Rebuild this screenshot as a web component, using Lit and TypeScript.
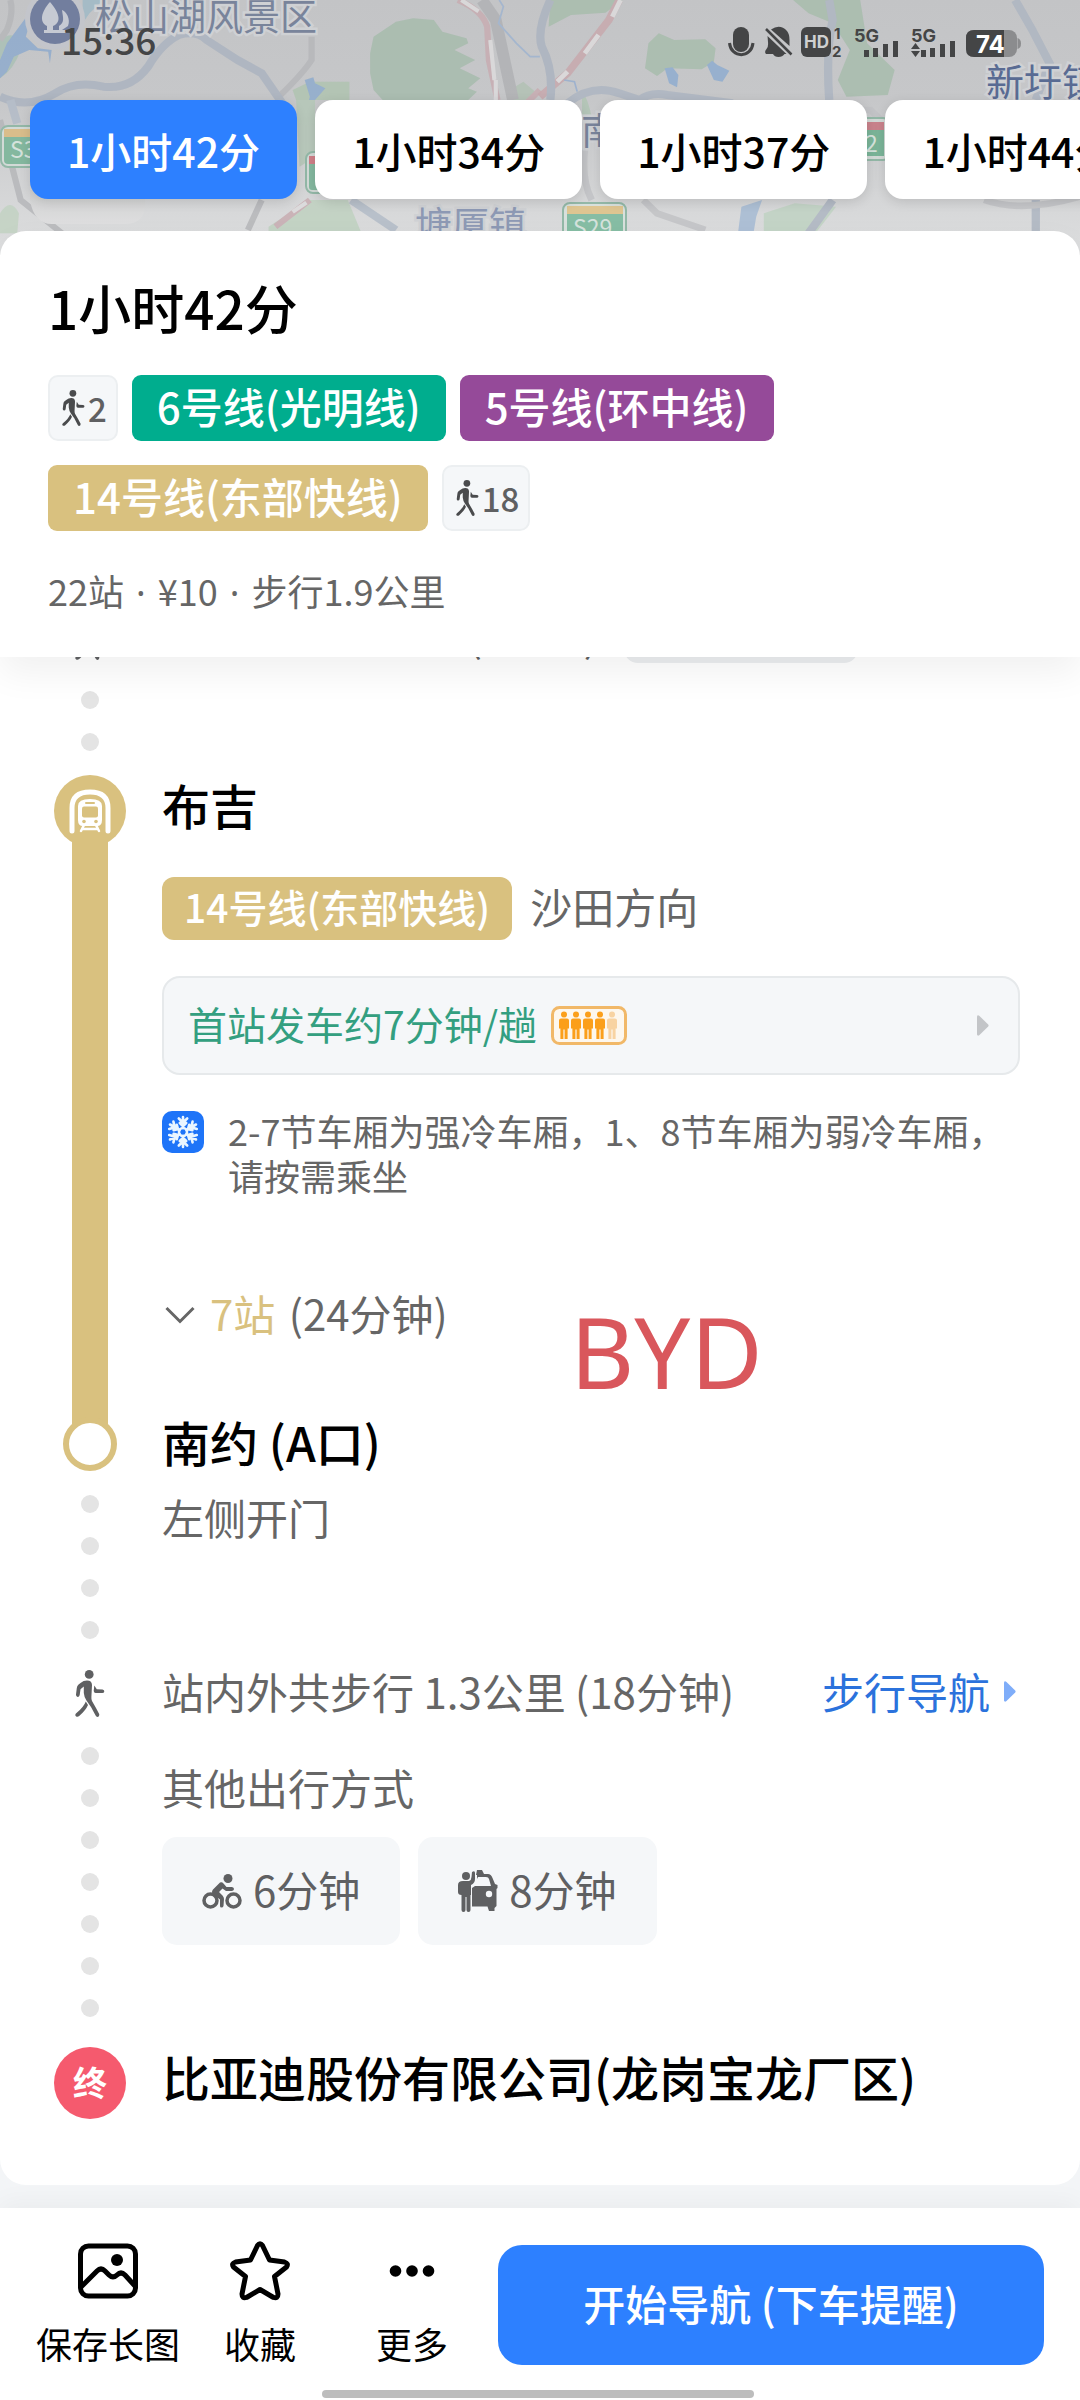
import { LitElement, html, svg, css } from "lit";
import { customElement, property, state } from "lit/decorators.js";
import { classMap } from "lit/directives/class-map.js";

const walker = svg`
  <circle cx="14.2" cy="4.4" r="4.4"></circle>
  <path d="M5.5 13Q8.500 10.600 12 10.600Q16.800 10.600 17 15L16.400 27Q16.200 29 17 31L21 38L24.300 44.200Q24.600 46.800 22.500 46.900Q21.400 47 20.600 45.600L16 37L11.600 30.800Q9.200 27.500 8.800 23V16.500L5.500 19.200L4.700 25Q4.200 27 2.600 26.900Q.8 26.600 1 24.600L1.800 18Q2 16 3.300 14.800Z"></path>
  <path d="M10.800 31.500L13 35Q11 40 4.200 46Q2.500 47.500 .9 46.300Q-.4 44.800 1.200 43.300Q8.800 37 10.800 31.500Z"></path>
  <path d="M19.300 15.500L21.800 19.300L27.500 19.500Q29.500 20 29.300 21.500Q29 23.200 27 23.100H20.600Q19 23 18.700 21Z"></path>`;

const person = svg`
  <circle cx="5" cy="3" r="3"></circle>
  <path d="M2 7H8Q10 7 10 9V17H8.600V27.500H5.600V18H4.400V27.500H1.400V17H0V9Q0 7 2 7Z"></path>`;

@customElement("walk-icon")
class WalkIcon extends LitElement {
  @property({ type: Boolean, reflect: true }) small = false;
  static styles = css`
    :host { display: block; width: 30px; height: 47px; color: #5f6062; }
    :host([small]) { width: 23px; height: 36px; color: #4a4b4d; }
    svg { display: block; width: 100%; height: 100%; fill: currentColor; }
  `;
  render() {
    return html`<svg viewBox="0 0 30 47" aria-hidden="true">${walker}</svg>`;
  }
}

@customElement("route-dots")
class RouteDots extends LitElement {
  @property({ type: Number }) count = 2;
  static styles = css`
    :host { display: flex; flex-direction: column; gap: 24px; }
    .dot { width: 18px; height: 18px; border-radius: 50%; background: #e4e4e4; }
  `;
  render() {
    return html`${Array.from({ length: this.count }, () => html`<span class="dot"></span>`)}`;
  }
}

@customElement("map-backdrop")
class MapBackdrop extends LitElement {
  static styles = css`
    :host { display: block; }
    svg { display: block; width: 100%; height: 100%; }
    text { font-family: "Noto Sans CJK SC", sans-serif; }
  `;
  render() {
    return html`
      <svg viewBox="0 0 1080 264" preserveAspectRatio="xMidYMin slice" aria-hidden="true">
        <defs>
          <linearGradient id="ground" x1="0" y1="0" x2="0" y2="1">
            <stop offset="0" stop-color="#c3c4c6"></stop>
            <stop offset=".38" stop-color="#c6c7c9"></stop>
            <stop offset=".85" stop-color="#d9dadb"></stop>
            <stop offset="1" stop-color="#dedfe0"></stop>
          </linearGradient>
          <linearGradient id="pill" x1="0" y1="0" x2="0" y2="1">
            <stop offset="0" stop-color="#cfd0d0"></stop>
            <stop offset="1" stop-color="#dededf"></stop>
          </linearGradient>
        </defs>
        <rect width="1080" height="264" fill="url(#ground)"></rect>

        <g transform="scale(.3443 .3333)" fill="none" opacity=".85">
          <path d="M0 120Q50 80 60 150Q40 210 0 235Z" fill="#abc1b6"></path>
          <path d="M70 60L100 20L75 110L110 145L150 150L145 190L140 155L85 150L40 170L20 215L0 235V180L20 130Z" fill="#8fabcd"></path>
          <path d="M240 0H300L260 40L240 70Z" fill="#a0bac6"></path>
          <path d="M1075 160L1085 110L1150 65L1200 55L1260 60L1285 95L1355 115L1360 130L1320 150L1380 180L1335 205L1395 235L1360 265L1385 275L1350 310H1120L1085 270L1075 220Z" fill="#a7bcad"></path>
          <path d="M850 270L900 245H1015V300H860Z" fill="#b0c4b1"></path>
          <path d="M1480 270L1520 245L1560 280L1540 300H1480Z" fill="#b3c2b5"></path>
          <path d="M885 240L910 232L915 250L945 265L915 300L900 390L880 420L885 350L900 290Z" fill="#8faccd"></path>
          <path d="M860 300H915V470L870 500Z" fill="#b5c7b8"></path>
          <path d="M780 680L900 600H1010L1050 700H780Z" fill="#c0d2c1"></path>
          <path d="M0 640Q30 590 55 640L50 700H0Z" fill="#c3d3c3"></path>
          <path d="M30 0Q40 40 20 90L0 120M905 110V180Q880 220 815 285M760 600L720 690M0 360L60 600L180 700" stroke="#b6b7ba" stroke-width="18"></path>
          <path d="M0 290Q80 330 160 280Q220 240 300 260Q380 270 430 200Q470 130 520 105Q570 90 600 120L690 180L760 220L820 310" stroke="#acb4c0" stroke-width="24"></path>
          <path d="M30 300L50 370M1020 600L1150 690" stroke="#b3bcc8" stroke-width="24"></path>
          <path d="M1400 0L1440 60L1490 300" stroke="#b1b2b5" stroke-width="34"></path>
          <path d="M1330 0Q1400 30 1415 80L1420 180L1445 300M900 600L800 680M1480 360L1568 270" stroke="#c8adb2" stroke-width="18"></path>
          <path d="M1340 0L1390 34M1424 120L1436 240M1440 240V300M890 608L850 636" stroke="#dddcdd" stroke-width="12"></path>
          <path d="M1450 0L1462 20L1448 70L1500 130L1540 170H1568" stroke="#9fb4d0" stroke-width="5"></path>
        </g>

        <g transform="translate(540) scale(.3443 .3333)" fill="none" opacity=".85">
          <path d="M30 0H240L190 38L90 45L25 80Z" fill="#a8bdad"></path>
          <path d="M735 0H930L950 130L1030 210L1010 285L890 290L865 240L900 150L850 70L780 40Z" fill="#a8bdad"></path>
          <path d="M315 130L345 100L390 120L480 118L510 145L505 185L470 208L370 205L340 228L305 205Z" fill="#a8bdad"></path>
          <path d="M362 205L385 202L402 225L398 262L375 250ZM485 195L500 182L515 195L550 212L530 245L505 240Z" fill="#8fadd0"></path>
          <path d="M650 640L740 610L860 620L800 700H650Z" fill="#c0d3c3"></path>
          <path d="M585 620L645 600L628 650L620 700H575Z" fill="#a6bbd4"></path>
          <path d="M122 270Q140 300 150 350H122Z" fill="#b1c5b5"></path>
          <path d="M230 0L200 60L80 220L0 290" stroke="#c8a9ae" stroke-width="22"></path>
          <path d="M234 0L210 50M170 105L130 160M80 215L50 245" stroke="#dedcdd" stroke-width="14"></path>
          <path d="M30 0Q-10 90 5 140Q40 210 30 300" stroke="#acb4c0" stroke-width="24"></path>
          <path d="M80 310Q150 250 230 280L290 300Q320 275 370 285L560 310M840 0L850 60Q830 150 840 300M850 600L780 700M1380 0L1430 90L1480 190L1440 300M1440 600V700" stroke="#aeb6c2" stroke-width="24"></path>
          <path d="M70 240L100 245L108 275" stroke="#98afcf" stroke-width="5"></path>
          <path d="M130 450Q120 540 150 600M300 600L340 640L480 690M850 330H960L1000 370M1290 600Q1400 640 1568 590" stroke="#c2c3c6" stroke-width="20"></path>
        </g>

        <path d="M30 190H145V204Q145 224 125 224H52Q34 224 30 200Z" fill="url(#pill)"></path>

        <circle cx="55" cy="19" r="30" fill="#c3c5cb"></circle>
        <circle cx="55" cy="19" r="25" fill="#727e9e"></circle>
        <path d="M50 2C41 12 39 22 47 26V30H44V33H66V30H62L68 26C71 19 66 11 62 10C63 18 65 22 59 26V30H53V26C63 22 58 11 50 2Z" fill="#c6cad3"></path>

        <g stroke="#cfd1d4" stroke-width="5" paint-order="stroke" fill="#79849b">
          <text x="95" y="31" font-size="37">松山湖风景区</text>
          <text x="581" y="145" font-size="37">南</text>
          <text x="415" y="239" font-size="37" fill="#8d99b4">塘厦镇</text>
          <text x="986" y="96" font-size="38" fill="#596b93">新圩镇</text>
        </g>

        <g stroke="#93b8a7" stroke-width="2">
          <rect x="1" y="126" width="44" height="41" rx="7" fill="#d3dad7"></rect>
          <rect x="306" y="152" width="30" height="41" rx="7" fill="#d3dad7"></rect>
          <rect x="840" y="118" width="50" height="42" rx="7" fill="#d3dad7"></rect>
          <rect x="563" y="203" width="63" height="45" rx="7" fill="#d8e0dc"></rect>
        </g>
        <rect x="4" y="129" width="40" height="35" rx="4" fill="#84b89f"></rect>
        <rect x="4" y="129" width="40" height="8" fill="#d9bd8b"></rect>
        <rect x="309" y="156" width="20" height="34" rx="3" fill="#84b89f"></rect>
        <rect x="309" y="156" width="20" height="8" fill="#cf7f88"></rect>
        <rect x="844" y="122" width="40" height="34" fill="#7ab498"></rect>
        <rect x="844" y="122" width="40" height="8" fill="#c9838c"></rect>
        <rect x="567" y="206" width="56" height="38" rx="3" fill="#86bda4"></rect>
        <rect x="567" y="206" width="56" height="8" fill="#dec591"></rect>
        <g fill="#d5e2dc">
          <text x="10" y="158" font-size="23">S3</text>
          <text x="865" y="152" font-size="23">2</text>
          <text x="573" y="236" font-size="23">S29</text>
        </g>
      </svg>
    `;
  }
}

@customElement("status-bar")
class StatusBar extends LitElement {
  static styles = css`
    :host {
      display: flex; align-items: center; justify-content: space-between;
      height: 84px; padding: 0 58px 0 61px; color: #444546;
      font: 500 37px/1 "Noto Sans CJK SC", sans-serif;
    }
    .time { padding-bottom: 5px; }
    svg { display: block; width: 294px; height: 32px; fill: currentColor; }
    text { font-family: Inter, sans-serif; font-weight: 700; }
  `;
  render() {
    return html`
      <span class="time">15:36</span>
      <svg viewBox="728 26 294 32" role="img" aria-label="麦克风 静音 HD 5G 5G 电量74">
        <rect x="733" y="27" width="16" height="25" rx="8"></rect>
        <path d="M729.500 43C731 58.500 751.500 58.500 753 43" fill="none" stroke="currentColor" stroke-width="3"></path>
        <path d="M771 29.500Q780 23.500 787 31Q789.500 34 789.500 40V46ZM767.500 36L786.500 54H784.500Q782.500 57 778.500 57Q774.500 57 773 54H766Q764 52 766.500 49Q768.500 47 768 42Z"></path>
        <path d="M766 29L791.500 54.500" stroke="currentColor" stroke-width="2.500"></path>
        <rect x="801" y="27" width="30" height="30" rx="6"></rect>
        <text x="804" y="48" font-size="17" fill="#cfd0d1">HD</text>
        <text x="834" y="39" font-size="15">1</text>
        <text x="832" y="57" font-size="15">2</text>
        <text x="854" y="42" font-size="18">5G</text>
        <path d="M864 50h5v7h-5zM873 48h5v9h-5zM883 44h5v13h-5zM893 41h5v16h-5z"></path>
        <text x="911" y="42" font-size="18">5G</text>
        <path d="M921 50h5v7h-5zM930 48h5v9h-5zM940 44h5v13h-5zM950 41h5v16h-5zM911 49L915.500 43L920 49ZM911 51H920L915.500 57Z"></path>
        <rect x="966" y="30" width="51" height="27" rx="8" fill="#8b8c8e"></rect>
        <path d="M974 30H1004V57H974Q966 57 966 49V38Q966 30 974 30Z"></path>
        <path d="M1017.500 38Q1021 39 1021 43.500Q1021 48 1017.500 49Z" fill="#8b8c8e"></path>
        <text x="976" y="53" font-size="24" fill="#fff">74</text>
      </svg>
    `;
  }
}

const plans = ["1小时42分", "1小时34分", "1小时37分", "1小时44分"];

@customElement("app-root")
class AppRoot extends LitElement {
  @state() private selected = 0;

  static styles = css`
    :host {
      display: block; color: #000; background: #f3f5f7;
      font-family: "Noto Sans CJK SC", sans-serif;
    }
    * { box-sizing: border-box; }
    button { margin: 0; border: 0; background: none; font: inherit; color: inherit; cursor: pointer; }
    h1, h2, p { margin: 0; }
    h1, h2 { font-weight: 500; }
    .page { position: relative; display: flex; flex-direction: column; min-height: 100vh; overflow: hidden; }
    .map { position: absolute; inset: 0 0 auto 0; height: 264px; }
    .top { position: relative; }
    .plans { display: flex; gap: 18px; padding: 16px 30px 32px; overflow: hidden; }
    .plan {
      flex: none; height: 99px; padding: 0 37px; border-radius: 18px; background: #fff;
      font-size: 41px; font-weight: 500; white-space: nowrap;
      box-shadow: 0 3px 12px rgba(0, 0, 0, .12);
    }
    .plan.on { background: #2d80ff; color: #fff; }

    .summary {
      position: relative; padding: 42px 48px 39px; border-radius: 26px 26px 0 0; background: #fff;
      display: flex; flex-direction: column; gap: 34px;
      box-shadow: 0 16px 36px rgba(0, 0, 0, .06);
    }
    .total { font-size: 53px; line-height: 68px; }
    .legs { display: flex; flex-wrap: wrap; gap: 24px 14px; max-width: 820px; }
    .line {
      height: 66px; padding: 0 25px; border-radius: 9px; color: #fff;
      font-size: 42px; font-weight: 500; line-height: 62px; white-space: nowrap;
    }
    .green { background: #00ad8e; }
    .purple { background: #954a99; }
    .gold { background: #d9c17f; }
    .foot {
      display: flex; align-items: center; gap: 3px; height: 66px; padding: 0 9px 0 12px;
      border: 2px solid #eceff1; border-radius: 10px; background: #f5f7f9;
      color: #5f6062; font-size: 33px; font-weight: 500;
    }
    .meta { color: #666; font-size: 36px; line-height: 51px; }
    .sep { padding: 0 4px; font-family: "Noto Sans", sans-serif; }

    .route { background: #fff; border-radius: 0 0 26px 26px; padding-bottom: 66px; }
    .peek {
      display: grid; grid-template: 6px / 72px 356px 116px 1fr; align-items: end;
      padding: 0 60px 0 54px; overflow: hidden; color: #5f6062;
      font-size: 42px; line-height: 42px;
    }
    .peek walk-icon { justify-self: center; margin-bottom: 3px; }
    .peek .mark { margin-bottom: 8px; text-align: right; }
    .peek .pill { width: 234px; height: 60px; margin-left: 26px; border-radius: 14px; background: #eceef0; }
    .step {
      display: grid; grid-template-columns: 72px minmax(0, 1fr); column-gap: 36px;
      padding: 0 60px 0 54px;
    }
    .rail { display: flex; flex-direction: column; align-items: center; }
    .gap { padding: 28px 60px 24px 54px; }
    .badge {
      display: flex; align-items: center; justify-content: center; flex: none;
      width: 72px; height: 72px; border-radius: 50%;
    }
    .badge svg { width: 72px; height: 72px; }
    .end { padding-bottom: 4px; background: #f55a6e; color: #fff; font-size: 34px; font-weight: 700; }
    .track { flex: 1; width: 36px; margin: -12px 0; background: #d9c17f; }
    .ring { position: relative; width: 54px; height: 54px; border: 6px solid #d9c17f; border-radius: 50%; background: #fff; }
    .rail .after { margin: 24px 0; }
    .stop { padding-bottom: 6px; font-size: 48px; line-height: 58px; }
    .exit .stop { line-height: 48px; }
    .ride { padding-bottom: 72px; }
    .head { display: flex; align-items: center; gap: 18px; margin-top: 38px; color: #666; font-size: 42px; line-height: 57px; }
    .head span { height: 63px; }
    .head .line { padding: 0 22px; border-radius: 12px; font-size: 39px; line-height: 59px; }
    .schedule {
      display: flex; align-items: center; gap: 14px; width: 100%; height: 99px; margin-top: 36px;
      padding: 0 29px 0 24px; border: 2px solid #e6e9eb; border-radius: 18px;
      background: #f5f7f9; color: #339f80; font-size: 39px;
    }
    .lift { padding-bottom: 5px; }
    .crowd { width: 76px; height: 39px; }
    .tri { width: 12px; height: 21px; }
    .schedule .tri { margin-left: auto; fill: #c3c5c8; }
    .notice { display: flex; gap: 24px; margin-top: 32px; padding-bottom: 4px; color: #666; font-size: 36px; line-height: 45px; }
    .notice svg { flex: none; width: 42px; height: 42px; margin-top: 4px; }
    .notice p { padding-top: 1px; }
    .stations {
      display: flex; align-items: center; gap: 15px; height: 60px; margin-top: 83px; padding: 0 3px;
      color: #666; font-size: 42px;
    }
    .stations svg { width: 30px; height: 18px; }
    .count { padding-right: 4px; color: #d9c17f; }
    .soft { padding-bottom: 4px; color: #666; font-size: 42px; line-height: 56px; }
    .door { margin-top: 18px; }
    .walk { display: flex; height: 60px; align-items: center; }
    .between { display: flex; justify-content: space-between; padding-right: 4px; }
    .guide { display: flex; align-items: center; gap: 14px; color: #2b72dc; text-decoration: none; }
    .guide .tri { fill: #7fadf9; }
    .others { margin-top: 36px; }
    .modes { display: flex; gap: 18px; margin: 18px 0 102px; }
    .mode {
      display: flex; align-items: center; gap: 11px; height: 108px; padding: 0 40px;
      border-radius: 15px; background: #f5f7f9; color: #5f6062; font-size: 42px;
    }
    .mode svg { width: 40px; height: 42px; fill: currentColor; }
    .note {
      position: absolute; left: 570px; top: 1283px; color: #d9575c;
      font: 400 99px/136px "Noto Sans", sans-serif;
    }

    .bar {
      position: relative; margin-top: 23px; padding: 33px 36px 2px 32px; background: #fff;
      box-shadow: 0 -6px 24px rgba(0, 0, 0, .04);
    }
    .actions { display: flex; align-items: center; }
    .action {
      display: flex; flex-direction: column; align-items: center; gap: 18px;
      flex: 0 0 152px; padding: 0 0 2px; font-size: 36px; line-height: 48px; white-space: nowrap;
    }
    .action svg { width: 60px; height: 60px; fill: none; stroke: #000; stroke-width: 5; stroke-linejoin: round; stroke-linecap: round; }
    .action .solid { fill: #000; stroke: none; }
    .start {
      flex: 1; height: 120px; margin-left: 10px; padding: 0 0 6px; border-radius: 24px;
      background: #2d80ff; color: #fff; font-size: 42px; font-weight: 500;
    }
    .home { width: 432px; height: 8px; margin: 21px auto 0; border-radius: 4px; background: #bdbdbd; }
  `;

  private triangle() {
    return html`<svg class="tri" viewBox="0 0 12 21" aria-hidden="true"><path d="M0 1.500Q.5 -.5 2.500 1L11.200 9.500Q12 10.500 11.200 11.500L2.500 20Q.5 21.500 0 19.500Z"></path></svg>`;
  }

  render() {
    return html`
      <div class="page">
        <map-backdrop class="map"></map-backdrop>
        <header class="top">
          <status-bar></status-bar>
          <nav class="plans">
            ${plans.map((label, i) => html`
              <button class=${classMap({ plan: true, on: i === this.selected })}
                @click=${() => (this.selected = i)}>${label}</button>`)}
          </nav>
        </header>

        <section class="summary">
          <h1 class="total">1小时42分</h1>
          <div class="legs">
            <span class="foot"><walk-icon small></walk-icon>2</span>
            <span class="line green">6号线(光明线)</span>
            <span class="line purple">5号线(环中线)</span>
            <span class="line gold">14号线(东部快线)</span>
            <span class="foot"><walk-icon small></walk-icon>18</span>
          </div>
          <p class="meta">22站 <span class="sep">·</span> ¥10 <span class="sep">·</span> 步行1.9公里</p>
        </section>

        <main class="route">
          <div class="peek">
            <walk-icon></walk-icon>
            <span class="mark">(</span>
            <span class="mark">)</span>
            <span class="pill"></span>
          </div>

          <div class="step gap"><div class="rail"><route-dots count="2"></route-dots></div></div>

          <section class="step">
            <div class="rail">
              <span class="badge gold">
                <svg viewBox="0 0 72 72" aria-hidden="true">
                  <path d="M18 56V33Q18 17 36 17T54 33V56" fill="none" stroke="#fff" stroke-width="5" stroke-linecap="round"></path>
                  <path d="M24 31Q24 24 36 24T48 31V45Q48 51 43 51H29Q24 51 24 45Z" fill="#fff"></path>
                  <rect x="31" y="27" width="10" height="2" rx="1" fill="#d9c17f"></rect>
                  <rect x="28" y="31.500" width="16" height="11" rx="2" fill="#d9c17f"></rect>
                  <circle cx="30" cy="46.500" r="1.800" fill="#d9c17f"></circle>
                  <circle cx="42" cy="46.500" r="1.800" fill="#d9c17f"></circle>
                  <path d="M30 50L27 56M42 50L45 56M28 54H44" stroke="#fff" stroke-width="2.500" stroke-linecap="round"></path>
                </svg>
              </span>
              <span class="track"></span>
            </div>
            <div class="ride">
              <h2 class="stop">布吉</h2>
              <div class="head"><span class="line gold">14号线(东部快线)</span><span>沙田方向</span></div>
              <button class="schedule">
                <span class="lift">首站发车约7分钟/趟</span>
                <svg class="crowd" viewBox="0 0 76 39" aria-hidden="true">
                  <rect x="1.500" y="1.500" width="73" height="36" rx="7" fill="#fdf7ee" stroke="#f1b868" stroke-width="3"></rect>
                  <g fill="#fb9f1b">
                    ${[8, 20, 32, 44].map((x) => svg`<g transform="translate(${x} 5.500)">${person}</g>`)}
                  </g>
                  <g fill="#f8d3a2" transform="translate(56 5.500)">${person}</g>
                </svg>
                ${this.triangle()}
              </button>
              <div class="notice">
                <svg viewBox="0 0 42 42" aria-hidden="true">
                  <rect width="42" height="42" rx="10" fill="#1e74f8"></rect>
                  <g fill="none" stroke="#eaf6ff" stroke-width="2.600" stroke-linecap="round">
                    <circle cx="21" cy="21" r="4"></circle>
                    ${[0, 60, 120, 180, 240, 300].map((a) => svg`
                      <path transform="rotate(${a} 21 21)" d="M21 17V6M16.800 7.500L21 11.500L25.200 7.500M17.800 12L21 15.200L24.200 12"></path>`)}
                  </g>
                </svg>
                <p>2-7节车厢为强冷车厢，1、8节车厢为弱冷车厢，请按需乘坐</p>
              </div>
              <button class="stations">
                <svg viewBox="0 0 30 18" aria-hidden="true"><path d="M1.500 2L15 15.500L28.500 2" fill="none" stroke="#666" stroke-width="3"></path></svg>
                <span class="lift"><span class="count">7站</span> (24分钟)</span>
              </button>
            </div>
          </section>

          <section class="step exit">
            <div class="rail">
              <span class="ring"></span>
              <route-dots class="after" count="4"></route-dots>
            </div>
            <div>
              <h2 class="stop">南约 (A口)</h2>
              <p class="soft door">左侧开门</p>
            </div>
          </section>

          <section class="step">
            <div class="rail">
              <span class="walk"><walk-icon></walk-icon></span>
              <route-dots class="after" count="7"></route-dots>
            </div>
            <div>
              <div class="soft between">
                <span>站内外共步行 1.3公里 (18分钟)</span>
                <a class="guide" href="#walk">步行导航${this.triangle()}</a>
              </div>
              <p class="soft others">其他出行方式</p>
              <div class="modes">
                <button class="mode">
                  <svg viewBox="0 0 40 42" aria-hidden="true">
                    <g fill="none" stroke="currentColor" stroke-width="3.500">
                      <circle cx="8.500" cy="30.500" r="6.500"></circle>
                      <circle cx="31.500" cy="30.500" r="6.500"></circle>
                    </g>
                    <circle cx="26" cy="8.500" r="4.500"></circle>
                    <path d="M18 12.500Q20 11.500 21.500 13.500L24.500 17H30Q32 17.300 32 19T30 21H24L20.500 18.500L17 22L20.500 25.500Q22 27 22 29L21.500 36Q21 37.500 19.500 37.500T18 36V29.500L11 24Q9 22 11 19.500Z"></path>
                  </svg>
                  <span class="lift">6分钟</span>
                </button>
                <button class="mode">
                  <svg viewBox="0 0 40 42" aria-hidden="true">
                    <circle cx="8" cy="6" r="4"></circle>
                    <path d="M14 2Q17 0 17 3V9Q17 13 13 15V25H12.500V40Q12.500 42 10.500 42T8.500 40V27H7.500V40Q7.500 42 5.500 42T3.500 40V25Q0 25 0 22V15Q0 11 5 11H11Q13.500 10 13.500 7Z"></path>
                    <path d="M19 0H24L26 4H30Q33 4 34.500 8L37 14L39.500 15V18L38.500 19V36L36.500 38V41H31L29.500 36.500H14V18L17 16H33L31 9Q30.500 7 28 7H20L19 9V5H18Z"></path>
                    <circle cx="31" cy="24" r="3.200" fill="#f5f7f9"></circle>
                  </svg>
                  <span class="lift">8分钟</span>
                </button>
              </div>
            </div>
          </section>

          <section class="step">
            <div class="rail"><span class="badge end">终</span></div>
            <h2 class="stop">比亚迪股份有限公司(龙岗宝龙厂区)</h2>
          </section>
        </main>

        <span class="note">BYD</span>

        <footer class="bar">
          <div class="actions">
            <button class="action">
              <svg viewBox="0 0 60 60" aria-hidden="true">
                <rect x="2.500" y="5" width="55" height="50" rx="8"></rect>
                <path d="M4 45L19 30Q23 26 27 30L31 34Q35 38 39 34Q43 30 47 34L57 45"></path>
                <circle class="solid" cx="39" cy="19" r="6"></circle>
              </svg>
              保存长图
            </button>
            <button class="action">
              <svg viewBox="0 0 60 60" aria-hidden="true">
                <path d="M27.500 4.500Q30 1 32.500 4.500L39.500 19L54.500 21Q59 22.500 56.500 26L44.500 35.500L48 53Q48 58 43.500 56.500L30 48.500L16.500 56.500Q12 58 12 53L15.500 35.500L3.500 26Q1 22.500 5.500 21L20.500 19Z"></path>
              </svg>
              收藏
            </button>
            <button class="action">
              <svg viewBox="0 0 60 60" aria-hidden="true">
                <g class="solid">
                  <circle cx="13.500" cy="30" r="5.800"></circle>
                  <circle cx="30" cy="30" r="5.800"></circle>
                  <circle cx="46.500" cy="30" r="5.800"></circle>
                </g>
              </svg>
              更多
            </button>
            <button class="start">开始导航 (下车提醒)</button>
          </div>
          <div class="home"></div>
        </footer>
      </div>
    `;
  }
}
